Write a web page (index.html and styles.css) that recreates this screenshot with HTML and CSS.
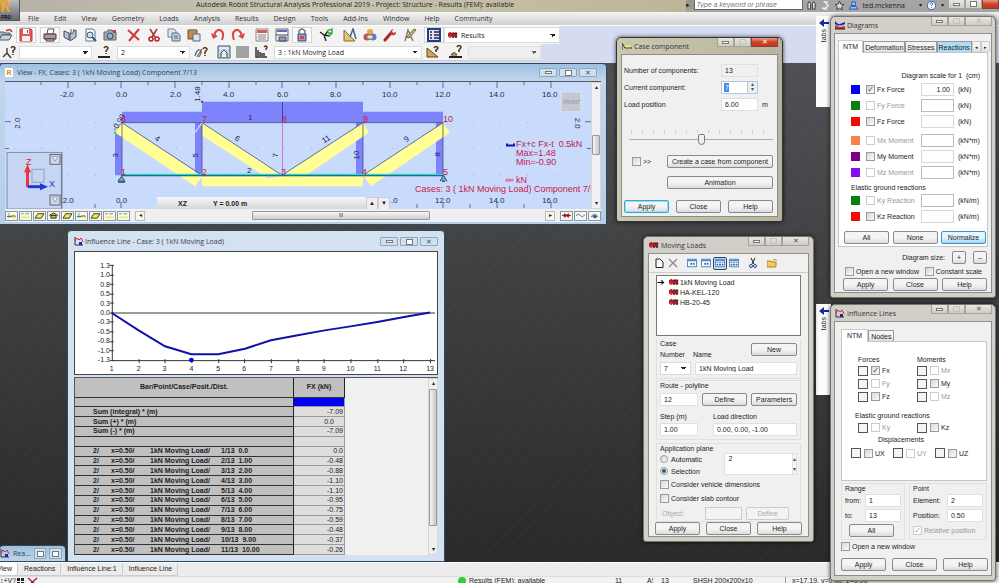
FILE: index.html
```html
<!DOCTYPE html>
<html lang="en">
<head>
<meta charset="utf-8">
<title>Autodesk Robot Structural Analysis Professional 2019</title>
<link rel="stylesheet" href="styles.css">
</head>
<body>
<svg class="defs" aria-hidden="true">
  <symbol id="i-open" viewBox="0 0 14 14"><path d="M0 4h5l1 1h5v2H3L0 12z" fill="#a9b7c6" stroke="#55606c"/><path d="M3 7h10l-3 5H0z" fill="#c9d6e2" stroke="#4b5866"/><path d="M7 3q4-3 6 1" fill="none" stroke="#d22" stroke-width="1.5"/></symbol>
  <symbol id="i-save" viewBox="0 0 14 14"><path d="M1 1h11l1 1v11H1z" fill="#e0585a" stroke="#b8383c"/><path d="M4 1h6v5H4z" fill="#fff"/><path d="M3 8h8v5H3z" fill="#f4f1f1"/><path d="M8 2h1v3H8z" fill="#556"/></symbol>
  <symbol id="i-print" viewBox="0 0 14 14"><path d="M4 6l1-5h6l-1 5z" fill="#fff" stroke="#555"/><path d="M1 6h12v5H1z" fill="#a99" stroke="#433"/><path d="M3 11h8v2H3z" fill="#ddd" stroke="#433"/></symbol>
  <symbol id="i-book" viewBox="0 0 14 14"><path d="M1 3l5 2v7L1 9zM7 5l6-3v7l-6 4z" fill="#b7c4d1" stroke="#3e4f60"/><path d="M8 1v5l2-1 1-4" fill="#e8eef4" stroke="#567"/></symbol>
  <symbol id="i-preview" viewBox="0 0 14 14"><path d="M3 1h7l2 2v10H3z" fill="#fff" stroke="#56748f"/><circle cx="7" cy="7" r="3" fill="#cfe2f2" stroke="#3b556d"/><path d="M9 9l4 4" stroke="#3b556d" stroke-width="2"/></symbol>
  <symbol id="i-camera" viewBox="0 0 14 14"><path d="M1 4h3l1-2h4l1 2h3v8H1z" fill="#a3a9b1" stroke="#666"/><circle cx="7" cy="8" r="3" fill="#7fb6e4" stroke="#445"/><path d="M10 2h3v3h-3z" fill="#d33"/></symbol>
  <symbol id="i-delete" viewBox="0 0 14 14"><path d="M1 2l11 10M12 1L2 13" stroke="#d03a3a" stroke-width="2" fill="none"/></symbol>
  <symbol id="i-cut" viewBox="0 0 14 14"><path d="M3 1l5 8M10 1L5 9" stroke="#a33" stroke-width="1.5"/><circle cx="4" cy="11" r="2" fill="none" stroke="#b22" stroke-width="1.5"/><circle cx="10" cy="11" r="2" fill="none" stroke="#b22" stroke-width="1.5"/></symbol>
  <symbol id="i-copy" viewBox="0 0 14 14"><path d="M1 1h6l2 2v6H1z" fill="#dfe8f0" stroke="#6b7f93"/><path d="M5 5h6l2 2v6H5z" fill="#c2d2e2" stroke="#54697e"/><path d="M7 8h4M7 10h4" stroke="#54697e"/></symbol>
  <symbol id="i-paste" viewBox="0 0 14 14"><path d="M1 2h9v9H1z" fill="#c08a50" stroke="#7a5022"/><path d="M3 1h5v2H3z" fill="#888"/><path d="M6 6h7v7H6z" fill="#dce6f0" stroke="#54697e"/></symbol>
  <symbol id="i-undo" viewBox="0 0 14 14"><path d="M3 8Q5 1 9 2q5 2 2 10" fill="none" stroke="#d8484c" stroke-width="2"/><path d="M0 5l2 6 5-3z" fill="#d8484c"/></symbol>
  <symbol id="i-redo" viewBox="0 0 14 14"><path d="M11 8Q9 1 5 2q-5 2-2 10" fill="none" stroke="#d8484c" stroke-width="2"/><path d="M14 5l-2 6-5-3z" fill="#d8484c"/></symbol>
  <symbol id="i-calc" viewBox="0 0 14 14"><path d="M1 1h12v12H1z" fill="#f5f5f5" stroke="#888"/><path d="M2 2h10v3H2z" fill="#d65a5a"/><path d="M3 7h8M3 9h8M3 11h8" stroke="#888"/></symbol>
  <symbol id="i-table" viewBox="0 0 14 14"><path d="M1 1h12v12H1z" fill="#f5f5f5" stroke="#667"/><path d="M2 2h10v2H2z" fill="#5b6db0"/><path d="M1 7h12M4 9h7v4H4z" fill="#8aa0c4" stroke="#445"/></symbol>
  <symbol id="i-lock" viewBox="0 0 14 14"><path d="M4 6V3q3-4 6 0v3" fill="none" stroke="#778" stroke-width="1.5"/><path d="M3 6h8v7H3z" fill="#88a6d8" stroke="#446"/><path d="M5 8h4v3H5z" fill="#d44"/></symbol>
  <symbol id="i-axis" viewBox="0 0 14 14"><path d="M1 4l4 3 2 6M5 7l6 1M6 7l3-4" fill="none" stroke="#222" stroke-width="1.3"/><path d="M8 4q1-3 4-2l1-1v4H9M13 5q-1 3-4 2" fill="none" stroke="#2a3" stroke-width="1.3"/></symbol>
  <symbol id="i-ruler" viewBox="0 0 14 14"><path d="M1 2v11h11z" fill="#e3c27a" stroke="#8a6a2c"/><path d="M7 9l3-8 3 10" fill="none" stroke="#4a6484" stroke-width="1.5"/></symbol>
  <symbol id="i-prefs" viewBox="0 0 14 14"><circle cx="7" cy="4" r="3" fill="#e6a83c"/><circle cx="4" cy="9" r="3.5" fill="#c94a5a"/><circle cx="10" cy="9" r="3.5" fill="#5b7fd0"/><path d="M4 7h6v4H4z" fill="#f4e2d0" stroke="#777"/></symbol>
  <symbol id="i-wrench" viewBox="0 0 14 14"><path d="M2 12l6-7" stroke="#a62828" stroke-width="3" stroke-linecap="round"/><path d="M8 2q-2 4 1 5 4 1 4-3l-3 1-1-2 2-2z" fill="#c03a3a"/></symbol>
  <symbol id="i-edit" viewBox="0 0 14 14"><path d="M2 13L5 2l5 11M3 9h5" fill="none" stroke="#777" stroke-width="1.4"/><path d="M4 9l7-8 2 1-7 8z" fill="#b9c66a" stroke="#8a5a3a"/></symbol>
  <symbol id="i-layout" viewBox="0 0 14 14"><path d="M1 1h12v12H1z" fill="#dfe5f5" stroke="#223c8a" stroke-width="2"/><path d="M3 4h2M3 7h2M3 10h2M7 4h5M7 7h5M7 10h5" stroke="#223" stroke-width="1.4"/></symbol>
  <symbol id="i-node" viewBox="0 0 14 14"><path d="M1 12l4-4V3M5 8l4 5" fill="none" stroke="#333" stroke-width="1.3"/><path d="M9 3q2-3 4 0 0 1-2 3v2M11 9v1" fill="none" stroke="#5a3418" stroke-width="1.6"/></symbol>
  <symbol id="i-bar" viewBox="0 0 14 14"><path d="M0 12h12" stroke="#222" stroke-width="2"/><path d="M6 3q2-3 4 0 0 1-2 3v1M8 8v1" fill="none" stroke="#5a3418" stroke-width="1.6"/></symbol>
  <symbol id="i-hand" viewBox="0 0 14 14"><path d="M1 11q2-7 5-6 3 1-1 7M3 12l5-8" fill="none" stroke="#666" stroke-width="1.2"/><path d="M9 4q2-3 4 0 0 1-2 3v2M11 10v1" fill="none" stroke="#5a3418" stroke-width="1.6"/></symbol>
  <symbol id="i-frame" viewBox="0 0 14 14"><path d="M1 1h12v12H1z" fill="#c4d6e6" stroke="#456"/><path d="M4 12V8l3-3 3 3v4" fill="#eef" stroke="#345"/><path d="M2 3h10" stroke="#fff"/></symbol>
  <symbol id="i-case" viewBox="0 0 14 14"><path d="M1 2v10h11M3 5v6M5 7v4M7 8v3M9 8v3" fill="none" stroke="#333" stroke-width="1.5"/><path d="M9 2q2-2 3 0 0 1-1 2v1" fill="none" stroke="#5a3418" stroke-width="1.5"/></symbol>
  <symbol id="i-tri" viewBox="0 0 14 14"><path d="M1 3v9h11z" fill="#d8a25a" stroke="#5e4220"/><path d="M8 3q2-3 4 0 0 1-2 2v2" fill="none" stroke="#5a3418" stroke-width="1.6"/></symbol>
  <symbol id="i-mode" viewBox="0 0 14 14"><path d="M0 12h13" stroke="#222" stroke-width="2"/><path d="M2 10q3-5 6 0z" fill="#e6b45e" stroke="#5e4220"/><path d="M8 2q2-3 4 0 0 1-2 3v2" fill="none" stroke="#5a3418" stroke-width="1.6"/></symbol>
  <symbol id="i-truck" viewBox="0 0 12 8"><path d="M0 2l3-2 2 2h6v4H0z" fill="#b3202c"/><path d="M5 1h6v2H5z" fill="#542028"/><circle cx="2.500" cy="6" r="1.500" fill="#e33"/><circle cx="6" cy="6" r="1.500" fill="#822"/><circle cx="9.500" cy="6" r="1.500" fill="#433"/></symbol>
  <symbol id="i-infl" viewBox="0 0 10 9"><path d="M1 0v8h8" fill="none" stroke="#333"/><path d="M1 4l2-3 2 2 2-2 2 4" fill="none" stroke="#d22"/><path d="M5 5h3v3H5z" fill="#22b"/></symbol>
  <symbol id="i-diag" viewBox="0 0 10 9"><path d="M0 0q3 4 5 3t5-2v2q-6 3-10 0z" fill="#22c"/><path d="M0 4l5 2 5-1v3H0z" fill="#c33"/><path d="M0 8h10" stroke="#222"/></symbol>
  <symbol id="i-comp" viewBox="0 0 10 9"><path d="M0 1l2 3 2 3h4V3L3 4z" fill="#f1ec7e"/><path d="M0 8V1l3 5h7" fill="none" stroke="#333"/></symbol>
  <symbol id="i-win" viewBox="0 0 12 10"><path d="M.5.500h11v9H.5z" fill="#fff" stroke="#2a6fc0"/><path d="M1 1h10v2H1z" fill="#3f8fe0"/><path d="M4 5h2v2H4zM7 5h2v2H7z" fill="#345a8c"/></symbol>
  <symbol id="i-grid" viewBox="0 0 12 10"><path d="M.5.500h11v9H.5z" fill="#fff" stroke="#2a6fc0"/><path d="M1 1h10v2H1z" fill="#3f8fe0"/><path d="M2 4h2v1H2zM5 4h2v1H5zM8 4h2v1H8zM2 6h2v2H2zM5 6h2v2H5zM8 6h2v2H8z" fill="#345a8c"/></symbol>
  <symbol id="i-arrow" viewBox="0 0 10 8"><path d="M0 4l5-4v3h5v2H5v3z" fill="#0a2f9e"/></symbol>
  <symbol id="i-shape" viewBox="0 0 12 8"><path d="M1 7l3-5h7L8 7z" fill="#f3ee55" stroke="#222"/></symbol>
  <symbol id="i-supp" viewBox="0 0 12 8"><path d="M1 4l5-3 5 3M3 4h6v3H3z" fill="#c9c43a" stroke="#222"/></symbol>
  <symbol id="i-dash" viewBox="0 0 12 8"><path d="M1 2h3M6 2h4" stroke="#58b"/><path d="M1 5h10v2H1z" fill="#f3ee55"/></symbol>
  <symbol id="i-beam" viewBox="0 0 12 8"><path d="M1 5h10" stroke="#223"/><path d="M3 1v6M6 4h4" stroke="#6a8" /><path d="M6 5h5v2H6z" fill="#f3ee55"/></symbol>
</svg>

<header class="titlebar">
  <button class="applogo" aria-label="Application menu"><span class="r">R</span><span class="pro">PRO</span></button>
  <h1>Autodesk Robot Structural Analysis Professional 2019 - Project: Structure - Results (FEM): available</h1>
  <div class="infocenter">
    <span class="caret">▸</span>
    <input class="search" aria-label="Search" placeholder="Type a keyword or phrase">
    <span class="info">
      <svg viewBox="0 0 10 10"><path d="M1 9V3l1-2h1l1 2v6zM6 9V3l1-2h1l1 2v6z" fill="#ddd" stroke="#333"/></svg>
      <svg viewBox="0 0 10 10"><path d="M8 1H4l4 4-3 3H1M3 9h4" fill="none" stroke="#eee" stroke-width="1.500"/></svg>
      <svg viewBox="0 0 10 10"><path d="M5 0l1.500 3.500L10 4 7.500 6.500 8 10 5 8 2 10l.5-3.500L0 4l3.500-.5z" fill="#ddd" stroke="#333"/></svg>
      <svg viewBox="0 0 10 10"><path d="M3 1h4v4H3zM0 9l2-3h6l2 3z" fill="#9cc4f4" stroke="#1d55b8"/></svg>
      <span class="user">ted.mckenna</span><span class="tiny">▾</span>
      <svg viewBox="0 0 10 10"><circle cx="5" cy="5" r="4.500" fill="#fff" stroke="#2458a8"/><path d="M3.500 4q0-2 1.500-2t1.500 1.500Q6 4.500 5 5v1M5 7v1" fill="none" stroke="#2458a8"/></svg>
      <span class="tiny">▾</span>
    </span>
    <span class="caps"><button class="cap" aria-label="Minimize"><i class="mn"></i></button><button class="cap" aria-label="Maximize"><i class="mx"></i></button><button class="cap red" aria-label="Close"></button></span>
  </div>
</header>

<nav class="menu">
  <a href="#">File</a><a href="#">Edit</a><a href="#">View</a><a href="#">Geometry</a><a href="#">Loads</a><a href="#">Analysis</a><a href="#">Results</a><a href="#">Design</a><a href="#">Tools</a><a href="#">Add-Ins</a><a href="#">Window</a><a href="#">Help</a><a href="#">Community</a>
</nav>

<div class="toolbars">
  <div class="bar first">
    <span class="grp"><button aria-label="Open"><svg><use href="#i-open"/></svg></button><button class="on" aria-label="Save"><svg><use href="#i-save"/></svg></button></span>
    <span class="grp"><button class="on" aria-label="Print"><svg><use href="#i-print"/></svg></button><button aria-label="Compose"><svg><use href="#i-book"/></svg></button><button aria-label="Preview"><svg><use href="#i-preview"/></svg></button><button aria-label="Capture"><svg><use href="#i-camera"/></svg></button></span>
    <span class="grp"><button aria-label="Delete"><svg><use href="#i-delete"/></svg></button><button aria-label="Cut"><svg><use href="#i-cut"/></svg></button><button aria-label="Copy"><svg><use href="#i-copy"/></svg></button><button aria-label="Paste"><svg><use href="#i-paste"/></svg></button></span>
    <span class="grp"><button aria-label="Undo"><svg><use href="#i-undo"/></svg></button><button aria-label="Redo"><svg><use href="#i-redo"/></svg></button></span>
    <span class="grp"><button aria-label="Calculate"><svg><use href="#i-calc"/></svg></button><button aria-label="Tables"><svg><use href="#i-table"/></svg></button><button class="on" aria-label="Lock results"><svg><use href="#i-lock"/></svg></button></span>
    <span class="grp"><button aria-label="Refresh"><svg><use href="#i-axis"/></svg></button></span>
    <span class="grp"><button aria-label="Measure"><svg><use href="#i-ruler"/></svg></button><button aria-label="Preferences"><svg><use href="#i-prefs"/></svg></button><button aria-label="Tools"><svg><use href="#i-wrench"/></svg></button><button aria-label="Edit"><svg><use href="#i-edit"/></svg></button></span>
    <span class="grp"><button class="on" aria-label="Layout"><svg><use href="#i-layout"/></svg></button></span>
    <span class="combo layout"><svg class="truck"><use href="#i-truck"/></svg><select aria-label="Layout"><option>Results</option></select></span>
  </div>
  <div class="bar second">
    <button aria-label="Node selection"><svg><use href="#i-node"/></svg></button>
    <select class="w72" aria-label="Nodes"><option></option></select>
    <button class="broad" aria-label="Bar selection"><svg><use href="#i-bar"/></svg></button>
    <select class="w72" aria-label="Bars"><option>2</option></select>
    <button aria-label="Graphical selection"><svg><use href="#i-hand"/></svg></button>
    <button class="broad" aria-label="Attributes"><svg><use href="#i-frame"/></svg></button>
    <i class="graybox"></i>
    <button class="broad" aria-label="Case selection"><svg><use href="#i-case"/></svg></button>
    <select class="w147" aria-label="Load case"><option>3 :  1kN Moving Load</option></select>
    <button aria-label="Component"><svg><use href="#i-tri"/></svg></button>
    <button class="broad" aria-label="Mode"><svg><use href="#i-mode"/></svg></button>
    <select class="w72 off" aria-label="Mode number" disabled><option></option></select>
  </div>
</div>

<main class="desk"></main>
<aside class="dock upper"><svg><use href="#i-arrow"/></svg><span>tabs</span></aside>
<aside class="dock lower"><svg><use href="#i-arrow"/></svg><span>tabs</span></aside>

<section class="win doc view">
  <div class="wt"><span class="ricon">R</span><h2>View - FX, Cases: 3 ( 1kN Moving Load) Component 7/13</h2><span class="caps doccaps"><button class="cap" aria-label="Minimize"><i class="mn"></i></button><button class="cap" aria-label="Maximize"><i class="mx"></i></button><button class="cap" aria-label="Close">✕</button></span></div>
  <div class="canvasrow">
    <svg class="canvas" viewBox="5 81 586 128" preserveAspectRatio="none">
      <rect x="5" y="81" width="586" height="128" fill="#c8dbfd"/>
      <path d="M41 81v3M68 81v6M95 81v3M121 81v6M148 81v3M175 81v6M202 81v3M229 81v6M256 81v3M282 81v6M309 81v3M336 81v6M363 81v3M390 81v6M417 81v3M443 81v6M470 81v3M497 81v6M524 81v3M551 81v6M5 121h6M585 121h6M5 148h4M587 148h4M95 204v4M121 202v6M417 204v4M443 202v6M470 204v4M497 202v6M524 204v4M551 202v6" stroke="#5d6f8c"/>
      <path d="M14 95h560M14 122h560M14 148h560M14 175h560" stroke="#9db2d6" stroke-dasharray="1 26"/>
      <g fill="#7c83fb"><path d="M122 111h80v11h-80zM202 101h161v21H202zM363 111h80v11h-80zM115 132h7v43h-7zM195 122h7v53h-7zM356 122h7v53h-7zM436 122h7v53h-7zM115 132l7-11v11z"/></g>
      <g fill="#ffff96"><path d="M122 122l-7 10 80 54 7-10zM202 122v13l66 43 15-2zM202 176h161v10H202zM283 175l80-53 6 10-76 52zM363 175l80-53 7 10-79 54z"/></g>
      <path d="M122 122h321M122 122v53M202 122v53M363 122v53M443 122v53M122 122l80 53M202 122l80 53l81-53M363 175l80-53" fill="none" stroke="#4d4f80" stroke-width=".8"/>
      <path d="M282.500 122v53" stroke="#d86ee0"/>
      <path d="M282.500 101v20" stroke="#4040b0"/>
      <path d="M121 174.500h322" stroke="#27d6dc" stroke-width="2"/><path d="M121 175.500h322" stroke="#124b56"/>
      <path d="M195 132l7-10" stroke="#fff"/>
      <path d="M118 181l3.500-5 3.500 5zM440 181l3.500-6 3.500 6" fill="#7fa6d0" stroke="#234e80"/><path d="M442 181h3M118 182h7" stroke="#234"/>
      <path d="M201 100h2v2h-2z" fill="#e01030"/><path d="M114 131h2v2h-2z" fill="#1d4"/>
      <g class="ax"><text x="60" y="96">-2.0</text><text x="116" y="96">0.0</text><text x="170" y="96">2.0</text><text x="223" y="96">4.0</text><text x="277" y="96">6.0</text><text x="330" y="96">8.0</text><text x="382" y="96">10.0</text><text x="435" y="96">12.0</text><text x="489" y="96">14.0</text><text x="542" y="96">16.0</text>
      <text x="60" y="203">-2.0</text><text x="116" y="203">0.0</text><text x="391" y="203">.0</text><text x="435" y="203">12.0</text><text x="489" y="203">14.0</text><text x="542" y="203">16.0</text>
      <text transform="translate(20 128) rotate(-90)">2.0</text><text transform="translate(575 117) rotate(90)">2.0</text>
      <text transform="translate(200 101) rotate(-90)">1.48</text><text transform="translate(116 131) rotate(-58)">-0.90</text>
      <text x="248" y="119">1</text><text x="247" y="173">2</text><text transform="translate(118 157) rotate(-90)">3</text><text transform="translate(154 139) rotate(34)">4</text><text transform="translate(198 157) rotate(-90)">5</text><text transform="translate(234 139) rotate(34)">6</text><text transform="translate(278 157) rotate(-90)">7</text><text transform="translate(324 143) rotate(-33)">11</text><text transform="translate(406 142) rotate(-33)">9</text><text transform="translate(359 159) rotate(-90)">10</text><text transform="translate(440 156) rotate(-90)">8</text></g>
      <g class="nd"><text x="121" y="121">6</text><text x="202" y="121">7</text><text x="282" y="121">8</text><text x="363" y="121">9</text><text x="443" y="121">10</text><text x="121" y="175">1</text><text x="202" y="175">2</text><text x="281" y="175">3</text><text x="362" y="175">4</text><text x="443" y="175">5</text></g>
      <g class="leg"><text x="516" y="147">Fx+c Fx-t  0.5kN</text><text x="516" y="156">Max=1.48</text><text x="516" y="165">Min=-0.90</text><text x="516" y="183">kN</text><text x="415" y="192">Cases: 3 ( 1kN Moving Load) Component 7/13</text></g>
      <path d="M507 143v2h7v-2" fill="none" stroke="#0a1bb0" stroke-width="2"/><path d="M506 181v-2h2v2zM509 181v-2h2v2zM512 181v-2h1v2" fill="none" stroke="#e05a9a"/>
      <rect x="561" y="91" width="20" height="20" fill="#c3c8d2" stroke="#dfe4ee"/><text class="front" x="563" y="103">FRONT</text>
      <rect x="7" y="152" width="55" height="57" fill="#c5d5f2" stroke="#7f8ea8"/><path d="M61.500 153v55" stroke="#6a7890"/>
      <rect x="50" y="154" width="10" height="10" fill="#ccd6e8" stroke="#667"/><path d="M52 156h6l-3 5z" fill="#e6ecf6" stroke="#9ab"/>
      <rect x="50" y="195" width="10" height="10" fill="#ccd6e8" stroke="#667"/><path d="M52 197h6l-3 5z" fill="#e6ecf6" stroke="#9ab"/>
      <rect x="32" y="169" width="12" height="13" fill="none" stroke="#85a6c4"/>
      <path d="M27.500 187v-18" stroke="#e8343a" stroke-width="3"/><path d="M24 172l3.500-8 3.500 8z" fill="#e8343a"/><path d="M28 186.500h14" stroke="#2037d8" stroke-width="3"/><path d="M40 183l8 3.500-8 3.500z" fill="#2037d8"/>
      <text class="zl" x="26" y="165">Z</text><text class="xl" x="49" y="187">X</text>
    </svg>
    <div class="vscroll"><span>▴</span><i></i><span>▾</span></div>
  </div>
  <div class="plane"><span>XZ</span><span>Y = 0.00 m</span><button aria-label="Up">▲</button><button aria-label="Down">▼</button></div>
  <div class="viewbar"><button aria-label="Node numbers"><svg><use href="#i-beam"/></svg></button><button aria-label="Bar numbers"><svg><use href="#i-dash"/></svg></button><button aria-label="Profiles"><svg><use href="#i-shape"/></svg></button><button aria-label="Supports"><svg><use href="#i-supp"/></svg></button><button aria-label="Panels"><svg><use href="#i-shape"/></svg></button><button aria-label="Local axes"><svg><use href="#i-beam"/></svg></button><button aria-label="Sections"><svg><use href="#i-shape"/></svg></button><button aria-label="Dashes"><svg><use href="#i-dash"/></svg></button><button aria-label="Values"><svg><use href="#i-dash"/></svg></button><button class="sm" aria-label="Scroll left">◂</button><span class="hs"><i>III</i></span><button class="sm" aria-label="Scroll right">▸</button><button aria-label="Loads"><svg viewBox="0 0 12 8"><path d="M1 4h10" stroke="#222"/><path d="M3 2l3 2 3-2M3 6l3-2 3 2" fill="none" stroke="#a11" stroke-width="1.500"/></svg></button><button aria-label="Deformation"><svg viewBox="0 0 12 8"><path d="M1 4q3-3 5 0t5-1" fill="none" stroke="#268"/></svg></button><button aria-label="Maps"><svg viewBox="0 0 12 8"><path d="M1 6q5-8 10 0z" fill="#2bd"/><path d="M5 4h3v3H5z" fill="#a22"/></svg></button></div>
</section>

<section class="win doc infl">
  <div class="wt"><svg class="wi"><use href="#i-infl"/></svg><h2>Influence Line - Case: 3 ( 1kN Moving Load)</h2><span class="caps doccaps"><button class="cap" aria-label="Minimize"><i class="mn"></i></button><button class="cap" aria-label="Maximize"><i class="mx"></i></button><button class="cap" aria-label="Close">✕</button></span></div>
  <svg class="chart" viewBox="74 251 364 123" preserveAspectRatio="none">
    <path d="M111.500 264v96M111 360.500h325M111 312.500h325M109 264.500h4M109 274.500h4M109 283.500h4M109 293.500h4M109 302.500h4M109 312.500h4M109 321.500h4M109 331.500h4M109 341.500h4M109 350.500h4M109 360.500h4M138.500 359v4M164.500 359v4M191.500 359v4M218.500 359v4M244.500 359v4M271.500 359v4M298.500 359v4M324.500 359v4M351.500 359v4M378.500 359v4M404.500 359v4M431.500 359v4" stroke="#333" fill="none"/>
    <path d="M111 312.500L138 330l26.500 16 26.500 8h27l27-5.500 26-8.500 27-5 27-5 26-4 27-4.500 27-5 26-4.500" fill="none" stroke="#1010a8" stroke-width="2"/>
    <circle cx="191" cy="360" r="2.500" fill="#0a0ae0"/>
    <g class="cy"><text x="109" y="267">1.3</text><text x="109" y="276">1.0</text><text x="109" y="286">0.8</text><text x="109" y="295">0.5</text><text x="109" y="305">0.3</text><text x="109" y="315">0.0</text><text x="109" y="324">-0.3</text><text x="109" y="334">-0.5</text><text x="109" y="343">-0.8</text><text x="109" y="353">-1.0</text><text x="109" y="362">-1.3</text></g>
    <g class="cx"><text x="111" y="371">1</text><text x="138" y="371">2</text><text x="164" y="371">3</text><text x="191" y="371">4</text><text x="218" y="371">5</text><text x="244" y="371">6</text><text x="271" y="371">7</text><text x="298" y="371">8</text><text x="324" y="371">9</text><text x="351" y="371">10</text><text x="378" y="371">11</text><text x="404" y="371">12</text><text x="431" y="371">13</text></g>
  </svg>
  <div class="sheet">
    <table>
      <colgroup><col class="ka"><col class="kb"><col class="kc"><col><col class="kf"></colgroup>
      <thead><tr><th colspan="4">Bar/Point/Case/Posit./Dist.</th><th>FX (kN)</th></tr></thead>
      <tbody>
      <tr><th colspan="4"></th><td class="sel"></td></tr>
      <tr><th colspan="4" class="sum">Sum (integral) * (m)</th><td>-7.09</td></tr>
      <tr><th colspan="4" class="sum">Sum (+) * (m)</th><td class="z">0.0</td></tr>
      <tr><th colspan="4" class="sum">Sum (-) * (m)</th><td>-7.09</td></tr>
      <tr><th colspan="4"></th><td></td></tr>
      <tr><th class="a">2/</th><th>x=0.50/</th><th>1kN Moving Load/</th><th>1/13&nbsp; 0.0</th><td>0.0</td></tr>
      <tr><th class="a">2/</th><th>x=0.50/</th><th>1kN Moving Load/</th><th>2/13&nbsp; 1.00</th><td>-0.48</td></tr>
      <tr><th class="a">2/</th><th>x=0.50/</th><th>1kN Moving Load/</th><th>3/13&nbsp; 2.00</th><td>-0.88</td></tr>
      <tr><th class="a">2/</th><th>x=0.50/</th><th>1kN Moving Load/</th><th>4/13&nbsp; 3.00</th><td>-1.10</td></tr>
      <tr><th class="a">2/</th><th>x=0.50/</th><th>1kN Moving Load/</th><th>5/13&nbsp; 4.00</th><td>-1.10</td></tr>
      <tr><th class="a">2/</th><th>x=0.50/</th><th>1kN Moving Load/</th><th>6/13&nbsp; 5.00</th><td>-0.95</td></tr>
      <tr><th class="a">2/</th><th>x=0.50/</th><th>1kN Moving Load/</th><th>7/13&nbsp; 6.00</th><td>-0.75</td></tr>
      <tr><th class="a">2/</th><th>x=0.50/</th><th>1kN Moving Load/</th><th>8/13&nbsp; 7.00</th><td>-0.59</td></tr>
      <tr><th class="a">2/</th><th>x=0.50/</th><th>1kN Moving Load/</th><th>9/13&nbsp; 8.00</th><td>-0.48</td></tr>
      <tr><th class="a">2/</th><th>x=0.50/</th><th>1kN Moving Load/</th><th>10/13&nbsp; 9.00</th><td>-0.37</td></tr>
      <tr><th class="a">2/</th><th>x=0.50/</th><th>1kN Moving Load/</th><th>11/13&nbsp; 10.00</th><td>-0.26</td></tr>
      </tbody>
    </table>
    <div class="vscroll long"><span>▴</span><i></i><span>▾</span></div>
  </div>
</section>

<section class="win doc mini"><svg class="wi"><use href="#i-infl"/></svg><h2>Rea...</h2><button class="cap" aria-label="Restore"><i class="mx"></i></button><button class="cap" aria-label="Maximize"><i class="mx"></i></button></section>

<section class="win dlg case">
  <div class="wt"><svg class="wi"><use href="#i-comp"/></svg><h2>Case component</h2><span class="caps"><button class="cap" aria-label="Minimize"><i class="mn"></i></button><button class="cap" aria-label="Maximize"><i class="mx dim"></i></button><button class="cap red big" aria-label="Close">✕</button></span></div>
  <form class="client">
    <div class="fields">
      <label for="c1">Number of components:</label><input id="c1" class="ro" value="13" readonly><span></span>
      <label for="c2">Current component:</label><span class="spin"><input id="c2" value="7"><span class="ud">▴<br>▾</span></span><span></span>
      <label for="c3">Load position</label><input id="c3" value="6.00"><span>m</span>
    </div>
    <div class="ticks"></div>
    <input class="range" type="range" min="1" max="13" value="7" aria-label="Component">
    <div class="crow"><label class="ck"><input type="checkbox">&gt;&gt;</label><button type="button">Create a case from component</button></div>
    <div class="crow"><span></span><button type="button">Animation</button></div>
    <div class="btns"><button type="button" class="def">Apply</button><button type="button">Close</button><button type="button">Help</button></div>
  </form>
</section>

<section class="win dlg diag">
  <div class="wt"><svg class="wi"><use href="#i-diag"/></svg><h2>Diagrams</h2><span class="caps"><button class="cap" aria-label="Minimize"><i class="mn"></i></button><button class="cap" aria-label="Maximize"><i class="mx dim"></i></button><button class="cap big dimx" aria-label="Close">✕</button></span></div>
  <form class="client">
    <div class="tabs"><button type="button" class="cur">NTM</button><button type="button">Deformation</button><button type="button">Stresses</button><button type="button" class="hot">Reactions</button><button type="button" class="ar" aria-label="Previous">◂</button><button type="button" class="ar" aria-label="Next">▸</button></div>
    <div class="page">
      <p class="scale">Diagram scale for 1&nbsp; (cm)</p>
      <div class="dr"><i class="sw blue"></i><label class="ck"><input type="checkbox" checked>Fx Force</label><input class="v" aria-label="Fx scale" value="1.00"><span>(kN)</span></div>
      <div class="dr"><i class="sw green"></i><label class="ck off"><input type="checkbox" disabled>Fy Force</label><input class="v dis" aria-label="Fy scale" disabled><span>(kN)</span></div>
      <div class="dr gap"><i class="sw red"></i><label class="ck"><input type="checkbox">Fz Force</label><input class="v" aria-label="Fz scale"><span>(kN)</span></div>
      <div class="dr"><i class="sw orange"></i><label class="ck off"><input type="checkbox" disabled>Mx Moment</label><input class="v dis" aria-label="Mx scale" disabled><span>(kN*m)</span></div>
      <div class="dr"><i class="sw purple"></i><label class="ck"><input type="checkbox">My Moment</label><input class="v" aria-label="My scale"><span>(kN*m)</span></div>
      <div class="dr"><i class="sw violet"></i><label class="ck off"><input type="checkbox" disabled>Mz Moment</label><input class="v dis" aria-label="Mz scale" disabled><span>(kN*m)</span></div>
      <p class="egr">Elastic ground reactions</p>
      <div class="dr"><i class="sw green"></i><label class="ck off"><input type="checkbox" disabled>Ky Reaction</label><input class="v dis" aria-label="Ky scale" disabled><span>(kN/m)</span></div>
      <div class="dr"><i class="sw red"></i><label class="ck"><input type="checkbox">Kz Reaction</label><input class="v" aria-label="Kz scale"><span>(kN/m)</span></div>
      <div class="btns"><button type="button">All</button><button type="button">None</button><button type="button" class="glow">Normalize</button></div>
    </div>
    <div class="size"><span>Diagram size:</span><button type="button">+</button><button type="button">--</button></div>
    <div class="opts"><label class="ck"><input type="checkbox">Open a new window</label><label class="ck"><input type="checkbox">Constant scale</label></div>
    <div class="btns"><button type="button">Apply</button><button type="button">Close</button><button type="button">Help</button></div>
  </form>
</section>

<section class="win dlg moving">
  <div class="wt"><svg class="truck"><use href="#i-truck"/></svg><h2>Moving Loads</h2><span class="caps"><button class="cap" aria-label="Minimize"><i class="mn"></i></button><button class="cap" aria-label="Maximize"><i class="mx dim"></i></button><button class="cap big" aria-label="Close">✕</button></span></div>
  <form class="client">
    <div class="mtool">
      <button type="button" aria-label="New"><svg viewBox="0 0 10 10"><path d="M2 1h4l3 3v5.500H2z" fill="#fff" stroke="#222"/></svg></button>
      <button type="button" aria-label="Delete"><svg viewBox="0 0 10 10"><path d="M1 1l8 8M9 1L1 9" stroke="#888" stroke-width="1.200"/></svg></button>
      <button type="button" class="sp" aria-label="Large icons"><svg><use href="#i-win"/></svg></button>
      <button type="button" aria-label="Small icons"><svg><use href="#i-win"/></svg></button>
      <button type="button" class="on" aria-label="List"><svg><use href="#i-grid"/></svg></button>
      <button type="button" aria-label="Details"><svg><use href="#i-grid"/></svg></button>
      <button type="button" class="sp" aria-label="Cut"><svg viewBox="0 0 10 10"><path d="M3 0l3 6M7 0L4 6" stroke="#222"/><circle cx="3" cy="8" r="1.500" fill="none" stroke="#24a"/><circle cx="7" cy="8" r="1.500" fill="none" stroke="#24a"/></svg></button>
      <button type="button" class="sp" aria-label="Open catalog"><svg viewBox="0 0 10 10"><path d="M0 3h4l1 1h4v5H0z" fill="#f5cc50" stroke="#a8822a"/><path d="M6 2q2-2 4 1" fill="none" stroke="#d80"/></svg></button>
    </div>
    <ul class="list"><li><span class="arr">➔</span><svg class="truck"><use href="#i-truck"/></svg>1kN Moving Load</li><li><span class="arr"></span><svg class="truck"><use href="#i-truck"/></svg>HA-KEL-120</li><li><span class="arr"></span><svg class="truck"><use href="#i-truck"/></svg>HB-20-45</li></ul>
    <div class="group g1">
      <div class="lh"><div><p>Case</p><div class="heads"><label for="m1">Number</label><label for="m2">Name</label></div></div><button type="button">New</button></div>
      <div class="mr"><select id="m1"><option>7</option></select><input id="m2" class="grow" value="1kN Moving Load"></div>
    </div>
    <div class="group g2">
      <p>Route - polyline</p>
      <div class="mr"><input class="w38" aria-label="Route" value="12"><button type="button">Define</button><button type="button">Parameters</button></div>
      <div class="heads broad"><label for="m3">Step (m)</label><label for="m4">Load direction</label></div>
      <div class="mr sb"><input id="m3" class="w38" value="1.00"><input id="m4" class="w84" value="0.00, 0.00, -1.00"></div>
    </div>
    <div class="group g3">
      <p>Application plane</p>
      <div class="ap"><div><label class="ck"><input type="radio" name="pl">Automatic</label><label class="ck"><input type="radio" name="pl" checked>Selection</label></div><textarea aria-label="Selection">2</textarea><span class="ud">▴<br>▾</span></div>
      <label class="ck opt"><input type="checkbox">Consider vehicle dimensions</label>
      <label class="ck opt"><input type="checkbox">Consider slab contour</label>
      <div class="obj"><label for="m5">Object:</label><input id="m5" disabled><button type="button" disabled>Define</button></div>
    </div>
    <div class="btns"><button type="button">Apply</button><button type="button">Close</button><button type="button">Help</button></div>
  </form>
</section>

<section class="win dlg il">
  <div class="wt"><svg class="wi"><use href="#i-infl"/></svg><h2>Influence Lines</h2><span class="caps"><button class="cap" aria-label="Minimize"><i class="mn"></i></button><button class="cap" aria-label="Maximize"><i class="mx dim"></i></button><button class="cap big" aria-label="Close">✕</button></span></div>
  <form class="client">
    <div class="tabs"><button type="button" class="cur">NTM</button><button type="button">Nodes</button></div>
    <div class="page">
      <div class="fm heading"><span>Forces</span><span>Moments</span></div>
      <div class="fm">
        <span class="cell"><i></i><label class="ck"><input type="checkbox" checked>Fx</label></span><span class="cell"><i></i><label class="ck off"><input type="checkbox" disabled>Mx</label></span>
        <span class="cell"><i></i><label class="ck off"><input type="checkbox" disabled>Fy</label></span><span class="cell"><i></i><label class="ck"><input type="checkbox">My</label></span>
        <span class="cell"><i></i><label class="ck"><input type="checkbox">Fz</label></span><span class="cell"><i></i><label class="ck off"><input type="checkbox" disabled>Mz</label></span>
      </div>
      <p class="e">Elastic ground reactions</p>
      <div class="fm"><span class="cell"><i></i><label class="ck off"><input type="checkbox" disabled>Ky</label></span><span class="cell"><i></i><label class="ck"><input type="checkbox">Kz</label></span></div>
      <p class="dsp">Displacements</p>
      <div class="uu"><span class="cell"><i></i><label class="ck"><input type="checkbox">UX</label></span><span class="cell"><i></i><label class="ck off"><input type="checkbox" disabled>UY</label></span><span class="cell"><i></i><label class="ck"><input type="checkbox">UZ</label></span></div>
    </div>
    <div class="rp">
      <div class="group"><p>Range</p><div class="f"><label for="r1">from:</label><input id="r1" value="1"></div><div class="f"><label for="r2">to:</label><input id="r2" value="13"></div><button type="button">All</button></div>
      <div class="group"><p>Point</p><div class="f"><label for="r3">Element:</label><input id="r3" value="2"></div><div class="f"><label for="r4">Position:</label><input id="r4" value="0.50"></div><label class="ck off rel"><input type="checkbox" checked disabled>Relative position</label></div>
    </div>
    <label class="ck"><input type="checkbox">Open a new window</label>
    <div class="btns"><button type="button">Apply</button><button type="button">Close</button><button type="button">Help</button></div>
  </form>
</section>

<nav class="doctabs"><a href="#" class="cur">View</a><a href="#">Reactions</a><a href="#">Influence Line:1</a><a href="#">Influence Line</a></nav>
<footer class="status"><span class="marks">↕+V?<svg viewBox="0 0 24 10"><path d="M1 1h3v3H1zM5 1h3v3H5zM1 5h3v3H1zM5 5h3v3H5z" fill="#222"/><path d="M12 1l9 8M21 1l-9 8" stroke="#b3203a" stroke-width="1.500"/></svg></span><span class="res"><i></i>Results (FEM): available</span><span class="s1">11</span><span class="s2">A¦</span><span class="s2">13</span><span class="s3">SHSH 200x200x10</span><span class="s4">x=17.19, y=0.00, z=0.90</span></footer>
</body>
</html>
```
FILE: styles.css
```css
* { box-sizing: border-box; }
html, body { height: 100%; }
body {
  margin: 0;
  display: flex;
  flex-direction: column;
  position: relative;
  overflow: hidden;
  font: 7px/9px "Liberation Sans", Arial, sans-serif;
  color: #1c1c1c;
  background: #444;
}
button, input, select, textarea { font: inherit; color: inherit; margin: 0; padding: 0; }
h1, h2, p, ul { margin: 0; padding: 0; font-weight: normal; }
a { color: inherit; text-decoration: none; }
i { font-style: normal; }
label { white-space: nowrap; }
.defs { position: absolute; width: 0; height: 0; }

/* application title */
.titlebar {
  display: flex;
  align-items: flex-start;
  height: 12px;
  padding-left: 196px;
  position: relative;
  background: linear-gradient(90deg, #b5b0a4, #c9c5b4 30%, #c0b99c 60%, #b0aa90);
}
.titlebar h1 {
  flex: 1;
  font: 7px/9px "Open Sans", sans-serif;
  white-space: nowrap;
}
.applogo {
  position: absolute;
  left: 0;
  top: 0;
  width: 20px;
  height: 21px;
  border: 1px solid #555;
  border-top: 0;
  border-left: 0;
  background: linear-gradient(#b8bcc0, #63676b);
  text-align: left;
  z-index: 2;
}
.applogo .r { display: block; font: bold 16px/14px Roboto, sans-serif; color: #f6a31c; }
.applogo .pro { display: block; font: bold 5px/6px Roboto, sans-serif; color: #111; padding-left: 1px; }
.infocenter { display: flex; align-items: flex-start; height: 12px; background: #a5a5a5; }
.caret { width: 8px; background: #9a968a; }
.search {
  width: 109px;
  height: 10px;
  border: 1px solid #666;
  border-top: 0;
  background: #fff;
  font-style: italic;
  font-size: 7px;
  padding-left: 2px;
}
.search::placeholder { color: #777; opacity: 1; }
.info { display: flex; align-items: center; gap: 5px; padding: 0 4px; height: 10px; }
.info svg { width: 9px; height: 9px; }
.user { font: 7px/9px "Open Sans", sans-serif; padding-right: 9px; }
.tiny { font-size: 6px; }

/* window caption buttons */
.caps { display: flex; }
.cap {
  width: 17px;
  height: 9px;
  border: 1px solid #a5a39d;
  border-top: 0;
  background: linear-gradient(#e8e6e0, #cfccc5);
  display: flex;
  align-items: center;
  justify-content: center;
  font-size: 7px;
  line-height: 8px;
  color: #555;
}
.cap .mn { width: 7px; height: 3px; border: 1px solid #777; background: #fff; }
.cap .mx { width: 7px; height: 6px; border: 1px solid #777; background: #fff; }
.cap .dim { border-color: #c5c2bc; background: none; }
.cap.big { width: 27px; }
.cap.red { background: linear-gradient(#e79a86, #cf4327 50%, #c4361c); border-color: #8a4034; color: #fff; }
.cap.dimx { color: #b5b2ac; }

/* menu and toolbars */
.menu {
  display: flex;
  align-items: center;
  gap: 15px;
  height: 13px;
  padding-left: 28px;
  font: 7px/11px "Open Sans", sans-serif;
  color: #333;
  background: linear-gradient(#f4f4f4, #d0d0d0);
}
.toolbars { height: 38px; background: #d5dcf1; border-top: 1px solid #fff; }
.bar { display: flex; align-items: center; background: #f3f3f3; width: max-content; height: 18px; }
.bar button { width: 20px; height: 16px; border: 0; background: none; display: flex; align-items: center; justify-content: center; }
.bar button svg { width: 14px; height: 14px; }
.bar button.on { background: #fafafa; border: 1px solid #d4d4d4; }
.first { gap: 4px; margin-left: -4px; }
.grp { display: flex; }
.combo { display: flex; align-items: center; width: 116px; height: 16px; border: 1px solid #ddd; background: #fff; padding-left: 3px; margin-left: -4px; }
.combo .truck { flex: none; }
.combo select { flex: 1; border: 0; height: 13px; }
.second { height: 17px; margin-left: -2px; border-bottom: 1px solid #ccc; }
.second button { width: 21px; }
.second button.broad { width: 25px; }
.bar select { font: 7px/11px "Open Sans", sans-serif; }
.w72 { width: 73px; }
.w147 { width: 148px; white-space: pre; }
.graybox { width: 13px; height: 12px; background: #a3a3a3; }
select {
  appearance: none;
  height: 13px;
  border: 1px solid #dadada;
  border-radius: 0;
  padding: 0 3px;
  background:
    linear-gradient(to top right, transparent 50%, #222 50%) right 6px center / 3px 3px no-repeat,
    linear-gradient(to top left, transparent 50%, #222 50%) right 3px center / 3px 3px no-repeat,
    #fff;
}
select.off { background-color: #eee; opacity: .7; }
.truck { width: 10px; height: 8px; flex: none; }

/* workspace */
.desk {
  flex: 1;
  background:
    linear-gradient(rgba(90, 94, 100, .55), rgba(20, 20, 20, .5)),
    repeating-linear-gradient(135deg, #4a4a4a 0 1px, #3c3c3c 1px 3px);
}
.dock {
  position: absolute;
  right: 168px;
  width: 15px;
  height: 91px;
  background: #fcfcfc;
  display: flex;
  flex-direction: column;
  align-items: center;
  gap: 2px;
  padding-top: 3px;
}
.dock svg { width: 10px; height: 8px; }
.dock span { writing-mode: vertical-rl; transform: rotate(180deg); }
.dock.upper { top: 16px; }
.dock.lower { top: 304px; }

.win { position: absolute; display: flex; flex-direction: column; }
.wt { display: flex; align-items: center; gap: 4px; flex: none; }
.wt h2 { flex: 1; white-space: nowrap; font: 7px/9px "Open Sans", sans-serif; color: #444; }
.wt .caps { align-self: flex-start; }
.wi { width: 10px; height: 9px; flex: none; }

/* document windows */
.doc { background: linear-gradient(#9fc0e0, #bfd6ec 16px, #b6cfe8); border: 1px solid #33475a; border-radius: 4px 4px 0 0; }
.doc h2 { font: 7px/9px "Open Sans", sans-serif; color: #33404d; }
.doc .wt { height: 17px; padding: 0 4px; }
.doccaps { gap: 2px; padding-top: 4px; }
.doccaps .cap { width: 18px; border: 1px solid #8ea5bc; border-radius: 1px; background: #cfe0f0; }
.ricon { width: 8px; height: 9px; background: #fff; color: #f08a18; font: bold 8px/9px Roboto, sans-serif; text-align: center; }
.view { left: -1px; top: 63px; width: 608px; height: 162px; padding: 0 5px; }
.view .wt { padding-left: 0; }
.canvasrow { display: flex; height: 128px; border-top: 1px solid #556; }
.canvas { flex: 1; min-width: 0; height: 100%; }
.canvas text { font-family: "Liberation Sans", Arial, sans-serif; font-size: 9px; white-space: pre; }
.canvas .ax text { font-size: 8px; }
.ax { fill: #222e44; }
.nd, .leg { fill: #c8184a; }
.canvas .front { font-size: 5px; fill: #8a8f9c; }
.zl { fill: #e0242c; }
.xl { fill: #1c34d0; }
.vscroll { width: 10px; display: flex; flex-direction: column; align-items: center; background: #f0f0f0; border: 1px solid #d5d5d5; font-size: 6px; }
.vscroll i { width: 8px; height: 20px; margin: 43px 0 auto; border: 1px solid #999; border-radius: 1px; background: linear-gradient(90deg, #f5f5f5, #c8c8c8); }
.plane {
  position: absolute;
  left: 157px;
  top: 133px;
  width: 233px;
  height: 13px;
  display: flex;
  align-items: center;
  background: linear-gradient(#f7f7f7, #d4d4d4);
}
.plane span { padding-left: 21px; font-size: 7px; font-weight: bold; }
.plane span + span { padding-left: 26px; flex: 1; }
.plane button { width: 12px; height: 13px; border: 1px solid #ccc; background: #eee; font-size: 6px; }
.viewbar { display: flex; align-items: center; height: 13px; background: #f0f0f0; gap: 1px; z-index: 1; }
.viewbar button { width: 13px; height: 10px; border: 1px solid #8898a8; background: #f7f7ee; display: flex; align-items: center; justify-content: center; }
.viewbar button svg { width: 11px; height: 7px; flex: none; }
.viewbar .sm { width: 10px; margin: 0 4px; border-color: #bbb; font-size: 6px; }
.hs { flex: 1; display: flex; padding-left: 102px; }
.hs i { width: 178px; height: 9px; border: 1px solid #999; border-radius: 1px; background: linear-gradient(#f7f7f7, #cdcdcd); text-align: center; font-size: 5px; line-height: 7px; }
.infl { left: 67px; top: 230px; width: 378px; height: 332px; padding: 0 6px 6px; background: #d3e1f0; }
.infl .wt { height: 20px; padding: 0; gap: 1px; }
.infl .doccaps { padding-top: 6px; gap: 2px; }
.chart { background: #fff; border: 1px solid #444; flex: none; height: 124px; }
.chart text { font-size: 7px; font-family: "Liberation Sans", Arial, sans-serif; fill: #222; }
.cy { text-anchor: end; }
.cx { text-anchor: middle; }
.sheet { display: flex; justify-content: space-between; flex: 1; min-height: 0; background: #f0f0f0; border: 1px solid #555; border-width: 1px 0 0 1px; margin-top: 2px; }
.sheet table { border-collapse: collapse; width: 270px; height: 177px; table-layout: fixed; }
.ka { width: 36px; }
.kb { width: 39px; }
.kc { width: 71px; }
.kf { width: 51px; }
.sheet tbody tr { height: 9px; }
.sheet th, .sheet td { padding: 0; line-height: 8px; white-space: nowrap; border-bottom: 1px solid #333; }
.sheet th { background: #c0c0c0; text-align: left; }
.sheet thead th { height: 19px; text-align: center; border-right: 1px solid #222; }
.sheet td { background: #dedede; text-align: right; padding-right: 1px; border: 1px solid #999; border-left-color: #222; }
.sheet .sum, .sheet .a { padding-left: 18px; }
.sheet .z { padding-right: 10px; }
.sheet .sel { background: #0000f5; }
.long i { height: 137px; margin: 1px 0 auto; }
.mini { left: -1px; top: 545px; width: 67px; height: 17px; flex-direction: row; align-items: center; gap: 3px; padding-right: 3px; }
.mini h2 { flex: 1; }
.mini .cap { width: 14px; height: 11px; border: 1px solid #8ea5bc; background: #cfe0f0; }

/* dialogs */
.dlg {
  background: #d2cfc8;
  border: 1px solid #77746e;
  border-radius: 5px 5px 3px 3px;
  box-shadow: 0 0 4px rgba(0, 0, 0, .7);
  padding: 0 3px 4px;
}
.dlg .wt { height: 16px; padding-left: 1px; gap: 2px; }
.dlg h2 { color: #333; }
.client { flex: 1; display: flex; flex-direction: column; min-height: 0; border: 1px solid #8f8d88; background: #f0f0f0; }
.client button {
  height: 13px;
  border: 1px solid #8a8a8a;
  border-radius: 2px;
  background: linear-gradient(#f4f4f4 50%, #dcdcdc);
  white-space: nowrap;
}
.client input, .client textarea { height: 13px; min-width: 0; border: 1px solid #e0e0e0; background: #fff; padding: 0 3px; border-radius: 0; }
.client .def { border-color: #3ba4d0; box-shadow: inset 0 0 0 1px #9be0f7; }
.client .glow { border-color: #3c8fc4; background: linear-gradient(#e4f5fd 50%, #9ed8f6); }
.btns { display: flex; justify-content: space-between; flex: none; }
.btns button { width: 45px; }
.ck { display: flex; align-items: center; gap: 2px; }
.client .ck input {
  appearance: none;
  width: 9px;
  height: 9px;
  flex: none;
  border: 1px solid #9a9a9a;
  background: linear-gradient(135deg, #d8d8d8, #fafafa);
  padding: 0;
  display: grid;
  place-items: center;
}
.client .ck input[type=checkbox]:checked::before { content: "✓"; font: bold 8px/8px "DejaVu Sans", sans-serif; color: #31487e; }
.client .ck input[type=radio] { border-radius: 50%; width: 8px; height: 8px; margin-right: 1px; }
.client .ck input[type=radio]:checked::before { content: ""; width: 4px; height: 4px; border-radius: 50%; background: #1f5f8a; }
.client .off { color: #999; }
.client .off input { border-color: #ccc; background: #fff; }
.client .ck.off input[type=checkbox]:checked::before { color: #999; }
.ud { font-size: 6px; line-height: 5px; text-align: center; color: #555; }

.case { left: 616px; top: 37px; width: 167px; height: 185px; padding: 0 4px 4px; background: linear-gradient(90deg, #cbc8b2, #b7b39c); border-color: #333; }
.case .client { padding: 7px 4px 3px 2px; }
.fields { display: grid; grid-template-columns: 97px 37px 1fr; grid-auto-rows: 17px; align-items: center; column-gap: 0; }
.fields > span:last-child { padding-left: 4px; }
.client .ro { background: #f0f0f0; }
.spin { display: flex; height: 13px; border: 1px solid #b5c7d8; background: #fff; }
.spin input { flex: 1; width: 10px; height: 11px; border: 0; color: #fff; background: linear-gradient(90deg, transparent 2px, #3c8ee8 2px 7px, transparent 7px) 0 1px / 100% 9px no-repeat #fff; }
.spin .ud { width: 10px; border-left: 1px solid #b5c7d8; background: #eee; }
.ticks { height: 3px; margin: 17px 6px 0 7px; background: repeating-linear-gradient(90deg, #ccc 0 1px, transparent 1px 11px); }
.client .range { appearance: none; border: 0; background: linear-gradient(#aaa, #aaa) center / 100% 1px no-repeat; height: 12px; margin: 0 0 8px 5px; padding: 0; }
.range::-webkit-slider-thumb { appearance: none; width: 7px; height: 11px; border: 1px solid #777; border-radius: 2px 2px 4px 4px; background: #eee; }
.crow { display: flex; justify-content: space-between; align-items: center; height: 21px; padding: 0 0 4px 8px; }
.crow button { width: 106px; }
.case .btns { margin-top: auto; }

.diag { right: 3px; top: 16px; width: 166px; height: 282px; }
.diag .client { padding: 6px 3px 1px; }
.tabs { display: flex; align-items: flex-end; height: 12px; flex: none; }
.tabs button { height: 11px; padding: 0 2px; border-radius: 0; border-bottom: 0; border-color: #999; }
.tabs .cur { height: 13px; margin-bottom: -1px; padding: 0 5px 2px 5px; background: #fff; border-color: #ccc; z-index: 1; }
.diag .tabs button { padding: 0 1px; }
.diag .tabs .cur { padding: 0 4px 2px; }
.diag .tabs .hot { background: #aedcf5; flex: 1; }
.tabs .ar { flex: none; width: 9px; font-size: 5px; border-color: #ccc; }
.page { background: #fff; border: 1px solid #c5c5c5; flex: none; }
.diag .page { height: 195px; padding: 18px 0 0 5px; }
.scale { text-align: right; padding: 0 7px 1px 0; }
.dr { display: grid; grid-template-columns: 15px 55px 33px 1fr; align-items: center; height: 16px; padding-left: 7px; }
.dr span { padding-left: 4px; }
.dr.gap { margin-bottom: 3px; }
.sw { width: 9px; height: 9px; }
.blue { background: #0000f5; }
.green { background: #0a8010; }
.red { background: #f50a0a; }
.orange { background: #f9814a; }
.purple { background: #800080; }
.violet { background: #8410f5; }
.client .v { text-align: right; border-color: #d8d8d8; }
.client .dis { border-color: #bbb; }
.egr { padding: 3px 0 0 7px; }
.diag .page .btns { margin: 7px 1px 0 0; }
.size { display: flex; align-items: center; justify-content: flex-end; gap: 7px; height: 20px; padding-right: 1px; }
.size button { width: 14px; }
.opts { display: flex; justify-content: space-between; padding: 0 6px 0 7px; }
.diag .client > .btns { margin-top: auto; padding: 0 1px 0 5px; }

.moving { right: 185px; top: 236px; width: 171px; height: 306px; padding: 0 4px 4px; }
.moving .client { padding: 0 6px 3px; }
.mtool { display: flex; align-items: center; height: 19px; flex: none; border-bottom: 1px solid #ccc; margin: 0 -6px; padding-left: 3px; }
.mtool button { width: 14px; height: 13px; border: 0; background: none; display: flex; align-items: center; justify-content: center; }
.mtool button.on { border: 1px solid #345; background: #cfe0f4; }
.mtool .sp { margin-left: 5px; }
.mtool svg { width: 10px; height: 10px; flex: none; }
.list { list-style: none; height: 61px; flex: none; margin: 2px 1px 0; border: 1px solid #777; background: #fff; padding-top: 1px; }
.list li { display: flex; align-items: center; height: 10px; gap: 1px; }
.arr { width: 11px; font: bold 9px/9px "DejaVu Sans", sans-serif; color: #000; }
.group { border: 1px solid #e0e0e0; }
.moving .group { padding: 0 3px; margin: 0 1px; display: flex; flex-direction: column; }
.moving .g1 { border-top: 0; margin-top: 3px; }
.lh { display: flex; justify-content: space-between; align-items: center; }
.lh button, .mr button { width: 46px; }
.heads { display: grid; grid-template-columns: 33px 1fr; margin-top: 2px; }
.heads.broad { grid-template-columns: 53px 1fr; margin: 3px 0 2px; }
.mr { display: flex; gap: 4px; margin: 3px 0 3px; }
.mr select { width: 31px; }
.mr .grow { flex: 1; }
.moving .g2 { margin-top: 1px; }
.g2 .mr { margin-top: 3px; justify-content: space-between; }
.w38 { width: 38px; }
.w84 { width: 84px; }
.g2 .mr.sb { margin-top: 0; }
.moving .g3 { margin-top: 3px; }
.ap { display: flex; align-items: flex-start; }
.ap > div { width: 65px; }
.ap .ck { height: 12px; }
.ap textarea { width: 68px; height: 22px; border-right: 0; resize: none; display: block; overflow: hidden; }
.ap .ud { flex: 1; line-height: 10px; background: #f5f5f5; border: 1px solid #e0e0e0; height: 22px; }
.opt { height: 14px; }
.obj { display: flex; align-items: center; gap: 4px; height: 16px; color: #aaa; }
.obj label { width: 41px; padding-left: 2px; }
.client .obj input { width: 37px; background: #f3f3f3; border-color: #ccc; }
.client .obj button { width: 43px; color: #aaa; border-color: #ccc; background: #f3f3f3; }
.moving .client > .btns { margin-top: auto; }

.il { right: 3px; top: 304px; width: 166px; height: 277px; }
.il .client { padding: 7px 3px 4px 6px; }
.il .page { height: 140px; margin-right: 1px; padding-top: 13px; }
.fm { display: grid; grid-template-columns: 59px 1fr; grid-auto-rows: 13px; align-items: center; padding-left: 16px; }
.fm.heading { grid-auto-rows: 9px; }
.cell { display: flex; align-items: center; gap: 3px; }
.cell > i { flex: none; width: 10px; height: 10px; border: 1px solid #555; background: #f4f4f4; }
.e { padding: 8px 0 1px 13px; }
.dsp { padding: 1px 0 0 36px; }
.uu { display: flex; gap: 5px; padding: 4px 0 0 9px; }
.uu .cell { width: 37px; }
.rp { display: grid; grid-template-columns: 64px 1fr; gap: 4px; margin: 2px 1px 2px 0; }
.rp .group { padding: 0 3px; height: 57px; display: flex; flex-direction: column; }
.rp .f { display: flex; justify-content: space-between; align-items: center; height: 15px; }
.rp .f input { width: 36px; }
.rp button { width: 45px; margin: 1px 0 0 4px; }
.rel { height: 15px; }
.il .client > .btns { margin-top: auto; }

/* bottom bars */
.doctabs { display: flex; align-items: center; gap: 1px; height: 14px; background: #ececec; border-top: 1px solid #fff; flex: none; margin-left: -8px; }
.doctabs a { padding: 0 5px; border: 1px solid #ccc; border-width: 0 1px 1px 0; line-height: 12px; }
.doctabs .cur { background: #fff; }
.status { display: flex; height: 7px; flex: none; overflow: hidden; background: #f2f2f2; border-top: 1px solid #ddd; white-space: nowrap; line-height: 8px; }
.marks { width: 458px; display: flex; }
.marks svg { width: 24px; height: 10px; }
.res { width: 157px; display: flex; gap: 3px; }
.res i { width: 8px; height: 8px; border-radius: 50%; background: #2fd03a; }
.s1 { width: 32px; }
.s2 { width: 14px; }
.s3 { width: 92px; padding-left: 18px; box-sizing: content-box; }
.s4 { border-left: 1px solid #999; padding-left: 6px; }
```
